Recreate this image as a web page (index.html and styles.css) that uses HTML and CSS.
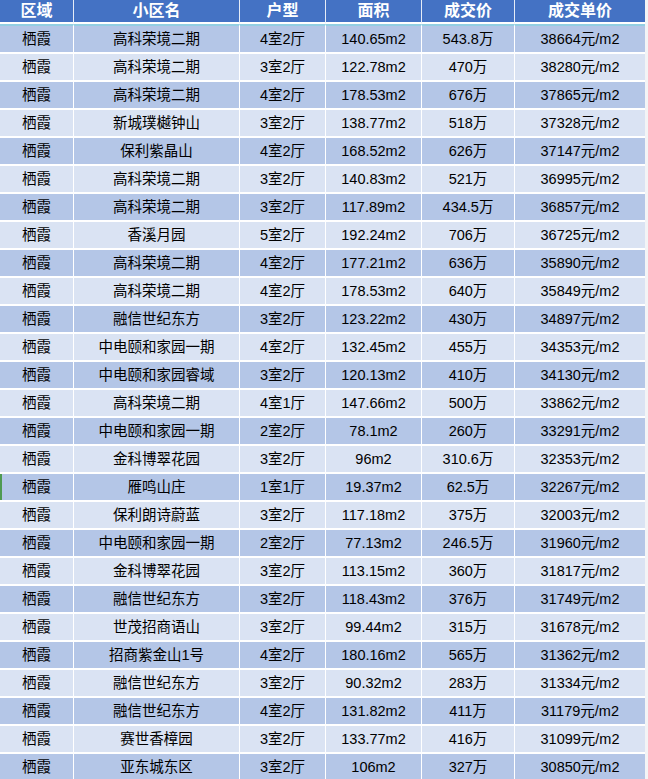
FILE: index.html
```html
<!DOCTYPE html>
<html lang="zh-CN">
<head>
<meta charset="utf-8">
<title>成交表</title>
<link rel="stylesheet" href="styles.css">
</head>
<body>
<div class="sheet">
<table class="deals">
  <colgroup>
    <col class="c1"><col class="c2"><col class="c3"><col class="c4"><col class="c5"><col class="c6">
  </colgroup>
  <thead>
    <tr><th>区域</th><th>小区名</th><th>户型</th><th>面积</th><th>成交价</th><th>成交单价</th></tr>
  </thead>
  <tbody>
    <tr><td>栖霞</td><td>高科荣境二期</td><td>4室2厅</td><td>140.65m2</td><td>543.8万</td><td>38664元/m2</td></tr>
    <tr><td>栖霞</td><td>高科荣境二期</td><td>3室2厅</td><td>122.78m2</td><td>470万</td><td>38280元/m2</td></tr>
    <tr><td>栖霞</td><td>高科荣境二期</td><td>4室2厅</td><td>178.53m2</td><td>676万</td><td>37865元/m2</td></tr>
    <tr><td>栖霞</td><td>新城璞樾钟山</td><td>3室2厅</td><td>138.77m2</td><td>518万</td><td>37328元/m2</td></tr>
    <tr><td>栖霞</td><td>保利紫晶山</td><td>4室2厅</td><td>168.52m2</td><td>626万</td><td>37147元/m2</td></tr>
    <tr><td>栖霞</td><td>高科荣境二期</td><td>3室2厅</td><td>140.83m2</td><td>521万</td><td>36995元/m2</td></tr>
    <tr><td>栖霞</td><td>高科荣境二期</td><td>3室2厅</td><td>117.89m2</td><td>434.5万</td><td>36857元/m2</td></tr>
    <tr><td>栖霞</td><td>香溪月园</td><td>5室2厅</td><td>192.24m2</td><td>706万</td><td>36725元/m2</td></tr>
    <tr><td>栖霞</td><td>高科荣境二期</td><td>4室2厅</td><td>177.21m2</td><td>636万</td><td>35890元/m2</td></tr>
    <tr><td>栖霞</td><td>高科荣境二期</td><td>4室2厅</td><td>178.53m2</td><td>640万</td><td>35849元/m2</td></tr>
    <tr><td>栖霞</td><td>融信世纪东方</td><td>3室2厅</td><td>123.22m2</td><td>430万</td><td>34897元/m2</td></tr>
    <tr><td>栖霞</td><td>中电颐和家园一期</td><td>4室2厅</td><td>132.45m2</td><td>455万</td><td>34353元/m2</td></tr>
    <tr><td>栖霞</td><td>中电颐和家园睿域</td><td>3室2厅</td><td>120.13m2</td><td>410万</td><td>34130元/m2</td></tr>
    <tr><td>栖霞</td><td>高科荣境二期</td><td>4室1厅</td><td>147.66m2</td><td>500万</td><td>33862元/m2</td></tr>
    <tr><td>栖霞</td><td>中电颐和家园一期</td><td>2室2厅</td><td>78.1m2</td><td>260万</td><td>33291元/m2</td></tr>
    <tr><td>栖霞</td><td>金科博翠花园</td><td>3室2厅</td><td>96m2</td><td>310.6万</td><td>32353元/m2</td></tr>
    <tr class="marked"><td>栖霞</td><td>雁鸣山庄</td><td>1室1厅</td><td>19.37m2</td><td>62.5万</td><td>32267元/m2</td></tr>
    <tr><td>栖霞</td><td>保利朗诗蔚蓝</td><td>3室2厅</td><td>117.18m2</td><td>375万</td><td>32003元/m2</td></tr>
    <tr><td>栖霞</td><td>中电颐和家园一期</td><td>2室2厅</td><td>77.13m2</td><td>246.5万</td><td>31960元/m2</td></tr>
    <tr><td>栖霞</td><td>金科博翠花园</td><td>3室2厅</td><td>113.15m2</td><td>360万</td><td>31817元/m2</td></tr>
    <tr><td>栖霞</td><td>融信世纪东方</td><td>3室2厅</td><td>118.43m2</td><td>376万</td><td>31749元/m2</td></tr>
    <tr><td>栖霞</td><td>世茂招商语山</td><td>3室2厅</td><td>99.44m2</td><td>315万</td><td>31678元/m2</td></tr>
    <tr><td>栖霞</td><td>招商紫金山1号</td><td>4室2厅</td><td>180.16m2</td><td>565万</td><td>31362元/m2</td></tr>
    <tr><td>栖霞</td><td>融信世纪东方</td><td>3室2厅</td><td>90.32m2</td><td>283万</td><td>31334元/m2</td></tr>
    <tr><td>栖霞</td><td>融信世纪东方</td><td>4室2厅</td><td>131.82m2</td><td>411万</td><td>31179元/m2</td></tr>
    <tr><td>栖霞</td><td>赛世香樟园</td><td>3室2厅</td><td>133.77m2</td><td>416万</td><td>31099元/m2</td></tr>
    <tr><td>栖霞</td><td>亚东城东区</td><td>3室2厅</td><td>106m2</td><td>327万</td><td>30850元/m2</td></tr>
  </tbody>
</table>
</div>
</body>
</html>
```

FILE: styles.css
```css
html, body {
  margin: 0;
  padding: 0;
  background: #f3f4f6;
}

.sheet {
  width: 648px;
  height: 779px;
  overflow: hidden;
}

.deals {
  border-collapse: separate;
  border-spacing: 0;
  table-layout: fixed;
  width: 645px;
  font-family: "Liberation Sans", "Noto Sans CJK SC", sans-serif;
  font-size: 14.5px;
  color: #000;
}

.c1 { width: 73px; }
.c2 { width: 166px; }
.c3 { width: 86px; }
.c4 { width: 96px; }
.c5 { width: 93px; }
.c6 { width: 131px; }

.deals th,
.deals td {
  padding: 0;
  text-align: center;
  vertical-align: middle;
  white-space: nowrap;
  line-height: 1;
}

.deals th {
  height: 22px;
  background: #4472c4;
  color: #fff;
  font-size: 16px;
  font-weight: bold;
  border-bottom: 2px solid #ffffff;
  border-left: 1px solid #e6ecf7;
}

.deals th:first-child,
.deals td:first-child {
  border-left: 0;
}

.deals td {
  height: 26px;
  border-left: 1px solid #ffffff;
  border-bottom: 2px solid #ffffff;
  background: #dae3f3;
}

.deals tbody tr:first-child td {
  border-top: 2px solid #93cfe3;
}

.deals tbody tr:nth-child(odd) td {
  background: #b4c6e7;
}

.deals tr.marked td:first-child {
  box-shadow: inset 2px 0 0 #4f9a52;
}
```
